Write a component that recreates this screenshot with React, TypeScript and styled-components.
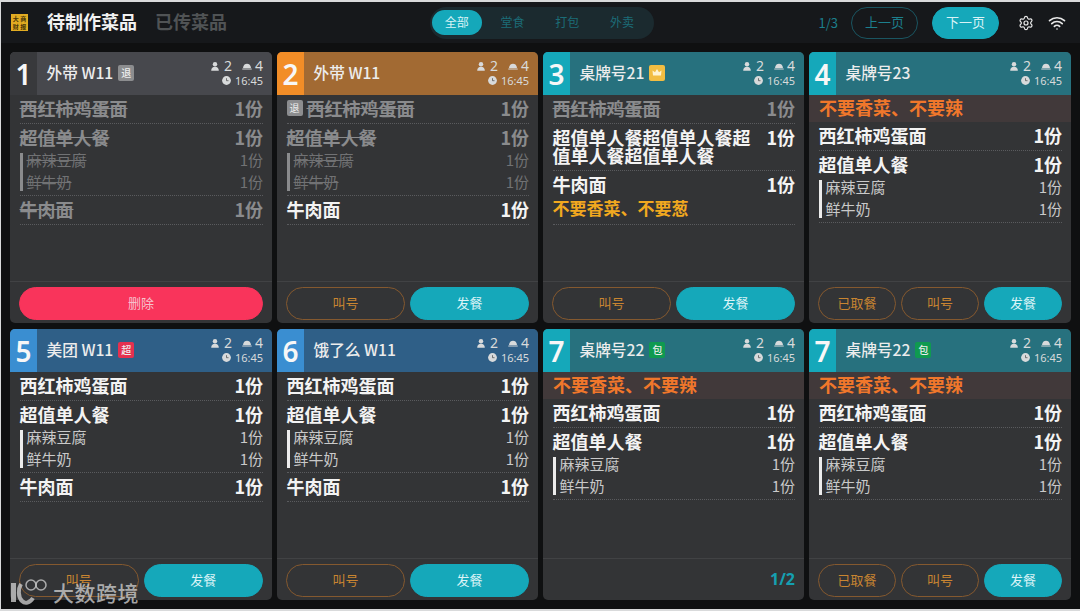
import React from "react";
import styled, { createGlobalStyle } from "styled-components";
import { Settings, Wifi } from "lucide-react";

const GlobalStyle = createGlobalStyle`
  html, body {
    margin: 0;
    padding: 0;
    background: #d9dadb;
  }
  * {
    box-sizing: border-box;
  }
  body {
    font-family: "Noto Sans CJK SC", "Noto Sans", sans-serif;
  }
`;

type Tone = "gray" | "orange" | "teal" | "blue";
type BadgeKind = "refund" | "over" | "crown" | "pack";
type ButtonKind = "outline" | "primary" | "danger";

type Item = {
  name: string;
  done?: boolean;
  refund?: boolean;
  note?: string;
  subs?: { name: string; done?: boolean }[];
};

type Order = {
  num: number;
  tone: Tone;
  title: string;
  badge?: BadgeKind;
  banner?: string;
  items: Item[];
  actions?: { label: string; kind: ButtonKind }[];
  pager?: string;
};

const toneColors: Record<Tone, { num: string; bar: string }> = {
  gray: { num: "#38393c", bar: "#47484d" },
  orange: { num: "#f28d27", bar: "#a26a33" },
  teal: { num: "#15a8ba", bar: "#27717e" },
  blue: { num: "#3a8ed1", bar: "#2f5f87" },
};

const badgeColors: Record<BadgeKind, string> = {
  refund: "#8c8d8f",
  over: "#e5304f",
  crown: "#f2bd42",
  pack: "#0f9a50",
};

const Page = styled.div`
  width: 1080px;
  height: 611px;
  padding: 2px 0 2px 1px;
  position: relative;
  overflow: hidden;
`;

const Screen = styled.div`
  height: 607px;
  background: #0f1011;
  display: flex;
  flex-direction: column;
`;

const Toolbar = styled.div`
  height: 41px;
  background: #16181b;
  display: grid;
  grid-template-columns: 429px 224px 1fr;
  align-items: center;
`;

const ToolLeft = styled.div`
  display: flex;
  align-items: center;
  padding-left: 10px;
`;

const Logo = styled.div`
  width: 17px;
  height: 17px;
  background: #e2ac22;
  color: #4a3608;
  font-size: 6px;
  line-height: 7px;
  font-weight: 700;
  display: grid;
  grid-template-columns: 1fr 1fr;
  text-align: center;
  padding: 1px;
  margin-right: 19px;
  overflow: hidden;
`;

const Heading = styled.div<{ $active?: boolean }>`
  font-size: 18px;
  font-weight: 700;
  line-height: 24px;
  margin-bottom: 3px;
  color: ${(p) => (p.$active ? "#f1f1f1" : "#505355")};
  margin-right: 18px;
`;

const Filters = styled.div`
  height: 32px;
  border-radius: 16px;
  background: #1b2a2f;
  display: flex;
  align-items: center;
  padding: 0 2px;
`;

const FilterTab = styled.div<{ $active?: boolean }>`
  width: 51px;
  height: 25px;
  margin-right: ${(p) => (p.$active ? "6px" : "5px")};
  padding-bottom: 2px;
  border-radius: 13px;
  display: flex;
  align-items: center;
  justify-content: center;
  font-size: 12px;
  color: ${(p) => (p.$active ? "#d9f3f6" : "#1b6d78")};
  background: ${(p) => (p.$active ? "#15a8ba" : "transparent")};
`;

const ToolRight = styled.div`
  display: flex;
  align-items: center;
  justify-content: flex-end;
  padding-right: 14px;
  color: #e8e8e8;
`;

const PageCount = styled.div`
  font-size: 13px;
  color: #1c7f8d;
  margin-right: 13px;
`;

const PageButton = styled.div<{ $primary?: boolean }>`
  width: 67px;
  height: 32px;
  padding-bottom: 2px;
  margin-right: ${(p) => (p.$primary ? "19px" : "14px")};
  border-radius: 16px;
  display: flex;
  align-items: center;
  justify-content: center;
  font-size: 13px;
  color: ${(p) => (p.$primary ? "#d9f3f6" : "#1c7f8d")};
  background: ${(p) => (p.$primary ? "#15a8ba" : "transparent")};
  border: 1px solid ${(p) => (p.$primary ? "#15a8ba" : "#1a5561")};
`;

const IconSlot = styled.div`
  display: flex;
  margin-right: 14px;
  &:last-child {
    margin-right: 0;
  }
`;

const Board = styled.div`
  flex: 1;
  padding: 9px 0 8px 9px;
  display: grid;
  grid-template-columns: 262px 261px 261px 262px;
  grid-template-rows: repeat(2, 271px);
  column-gap: 5px;
  row-gap: 6px;
`;

const Card = styled.div`
  background: #333436;
  border-radius: 5px;
  overflow: hidden;
  display: flex;
  flex-direction: column;
`;

const CardHead = styled.div<{ $tone: Tone }>`
  height: 43px;
  flex: none;
  display: flex;
  background: ${(p) => toneColors[p.$tone].bar};
`;

const NumCell = styled.div<{ $tone: Tone }>`
  width: 27px;
  flex: none;
  background: ${(p) => toneColors[p.$tone].num};
  color: #f7f7f7;
  font-family: "Noto Sans", sans-serif;
  font-size: 28px;
  font-weight: 600;
  display: flex;
  align-items: center;
  justify-content: center;
`;

const HeadTitle = styled.div`
  flex: 1;
  padding: 0 0 2px 9.5px;
  display: flex;
  align-items: center;
  font-size: 15.7px;
  font-weight: 500;
  color: #ececec;
  white-space: nowrap;
`;

const Badge = styled.span<{ $kind: BadgeKind }>`
  width: 16px;
  height: 16px;
  margin-left: 5px;
  border-radius: 2px;
  background: ${(p) => badgeColors[p.$kind]};
  color: #eee;
  font-size: 10px;
  display: inline-flex;
  align-items: center;
  justify-content: center;
`;

const Meta = styled.div`
  padding: 6px 9px 0 0;
  display: flex;
  flex-direction: column;
  align-items: flex-end;
  font-family: "Noto Sans", sans-serif;
  color: #d8dadb;
`;

const MetaLine = styled.div`
  display: flex;
  align-items: center;
  font-size: 14px;
  line-height: 16px;
`;

const MetaTime = styled(MetaLine)`
  font-size: 11px;
  line-height: 13px;
`;

const MetaGap = styled.span`
  width: 10px;
`;

const MetaIcon = styled.svg<{ $gap: number }>`
  margin-right: ${(p) => p.$gap}px;
`;

const Banner = styled.div`
  height: 27px;
  flex: none;
  padding-left: 10px;
  background: #41393a;
  color: #f0772b;
  font-size: 18px;
  font-weight: 700;
  line-height: 25px;
`;

const Body = styled.div`
  flex: 1;
  padding: 0 9px 0 9.5px;
`;

const Row = styled.div`
  padding: 4px 0 6px;
  border-bottom: 1px dotted #5a5b5e;
`;

const MainLine = styled.div<{ $done?: boolean }>`
  display: flex;
  justify-content: space-between;
  font-size: 18px;
  font-weight: 700;
  line-height: 18px;
  color: ${(p) => (p.$done ? "#8a8b8d" : "#f3f3f3")};
`;

const ItemName = styled.span<{ $done?: boolean }>`
  display: flex;
  align-items: center;
  max-width: 200px;
  text-decoration: ${(p) => (p.$done ? "line-through" : "none")};
`;

const Qty = styled.span`
  flex: none;
`;

const RefundTag = styled(Badge)`
  margin: 0 4px 0 0;
  font-size: 10px;
  font-weight: 400;
`;

const Note = styled.div`
  margin-top: 5px;
  font-size: 17px;
  font-weight: 700;
  line-height: 20px;
  color: #f1a81f;
`;

const SubList = styled.div<{ $done?: boolean }>`
  margin-top: 3px;
  margin-bottom: -3px;
  padding-left: 7px;
  position: relative;
  &::before {
    content: "";
    position: absolute;
    left: 0;
    top: 4px;
    bottom: 1px;
    width: 3px;
    background: ${(p) => (p.$done ? "#8a8b8d" : "#ececec")};
  }
`;

const SubLine = styled.div<{ $done?: boolean }>`
  display: flex;
  justify-content: space-between;
  font-size: 15px;
  line-height: 21.5px;
  color: ${(p) => (p.$done ? "#717274" : "#c9c9c9")};
`;

const SubName = styled.span<{ $done?: boolean }>`
  text-decoration: ${(p) => (p.$done ? "line-through" : "none")};
`;

const CardFoot = styled.div`
  height: 42px;
  flex: none;
  border-top: 1px solid #414244;
  padding: 5px 9px 0;
  display: flex;
  gap: 5px;
  align-items: flex-start;
`;

const ActionButton = styled.div<{ $kind: ButtonKind }>`
  flex: 1;
  height: 33px;
  padding-bottom: 3px;
  border-radius: 17px;
  display: flex;
  align-items: center;
  justify-content: center;
  font-size: 13px;
  border: 1px solid
    ${(p) =>
      p.$kind === "outline"
        ? "#85592f"
        : p.$kind === "danger"
          ? "#f9345b"
          : "#15a8ba"};
  background: ${(p) =>
    p.$kind === "outline"
      ? "transparent"
      : p.$kind === "danger"
        ? "#f9345b"
        : "#15a8ba"};
  color: ${(p) =>
    p.$kind === "outline"
      ? "#c98531"
      : p.$kind === "danger"
        ? "#f6c2cd"
        : "#dcf4f7"};
`;

const Pager = styled.div`
  margin-left: auto;
  font-family: "Noto Sans", sans-serif;
  font-size: 16px;
  font-weight: 700;
  line-height: 30px;
  color: #159fb0;
`;

const Watermark = styled.div`
  position: absolute;
  left: 10px;
  bottom: 5px;
  display: flex;
  align-items: center;
  color: rgba(205, 205, 205, 0.78);
  font-size: 21px;
  font-weight: 500;
  line-height: 28px;
  letter-spacing: 0.5px;
  pointer-events: none;
`;

const PersonIcon = () => (
  <MetaIcon $gap={5} width="8" height="9" viewBox="0 0 9 10" fill="currentColor">
    <circle cx="4.5" cy="2.5" r="2.5" />
    <path d="M0.200 9.800c0-3.200 1.800-4.500 4.300-4.500s4.300 1.300 4.300 4.500z" />
  </MetaIcon>
);

const DishIcon = () => (
  <MetaIcon $gap={3} width="10" height="7" viewBox="0 0 12 8" fill="currentColor">
    <path d="M1.200 5.800C1.400 2.600 3.400 0.800 6 0.800s4.600 1.800 4.800 5z" />
    <rect x="0.200" y="6.300" width="11.600" height="1.400" rx="0.600" />
  </MetaIcon>
);

const ClockIcon = () => (
  <MetaIcon $gap={4} width="9" height="9" viewBox="0 0 9 9">
    <circle cx="4.500" cy="4.500" r="4.400" fill="currentColor" />
    <path d="M4.500 2.200v2.500h2" stroke="#555" strokeWidth="0.800" fill="none" />
  </MetaIcon>
);

const CrownIcon = () => (
  <svg width="10" height="9" viewBox="0 0 10 9" fill="#fff3d0">
    <path d="M1 7.500 0.500 2.500 3 4.300 5 1l2 3.300 2.500-1.800L9 7.500z" />
  </svg>
);

const WatermarkLogo = () => (
  <svg width="43" height="28" viewBox="0 0 43 28" fill="none" stroke="currentColor">
    <path d="M3.500 5v19" strokeWidth="5" />
    <path d="M11 6c-3 5-3 13 1 17 3 3 8 2 11-3" strokeWidth="4" />
    <circle cx="21" cy="7" r="5" strokeWidth="1.500" />
    <circle cx="31" cy="7" r="5" strokeWidth="1.500" />
  </svg>
);

const soup = (done?: boolean, refund?: boolean): Item => ({
  name: "西红柿鸡蛋面",
  done,
  refund,
});

const combo = (done?: boolean): Item => ({
  name: "超值单人餐",
  done,
  subs: [
    { name: "麻辣豆腐", done },
    { name: "鲜牛奶", done },
  ],
});

const noodles = (done?: boolean): Item => ({ name: "牛肉面", done });

const twoActions = [
  { label: "叫号", kind: "outline" as ButtonKind },
  { label: "发餐", kind: "primary" as ButtonKind },
];

const threeActions = [
  { label: "已取餐", kind: "outline" as ButtonKind },
  ...twoActions,
];

const orders: Order[] = [
  {
    num: 1,
    tone: "gray",
    title: "外带 W11",
    badge: "refund",
    items: [soup(true), combo(true), noodles(true)],
    actions: [{ label: "删除", kind: "danger" }],
  },
  {
    num: 2,
    tone: "orange",
    title: "外带 W11",
    items: [soup(true, true), combo(true), noodles()],
    actions: twoActions,
  },
  {
    num: 3,
    tone: "teal",
    title: "桌牌号21",
    badge: "crown",
    items: [
      soup(true),
      { name: "超值单人餐超值单人餐超值单人餐超值单人餐" },
      { name: "牛肉面", note: "不要香菜、不要葱" },
    ],
    actions: twoActions,
  },
  {
    num: 4,
    tone: "teal",
    title: "桌牌号23",
    banner: "不要香菜、不要辣",
    items: [soup(), combo()],
    actions: threeActions,
  },
  {
    num: 5,
    tone: "blue",
    title: "美团 W11",
    badge: "over",
    items: [soup(), combo(), noodles()],
    actions: twoActions,
  },
  {
    num: 6,
    tone: "blue",
    title: "饿了么 W11",
    items: [soup(), combo(), noodles()],
    actions: twoActions,
  },
  {
    num: 7,
    tone: "teal",
    title: "桌牌号22",
    badge: "pack",
    banner: "不要香菜、不要辣",
    items: [soup(), combo()],
    pager: "1/2",
  },
  {
    num: 7,
    tone: "teal",
    title: "桌牌号22",
    badge: "pack",
    banner: "不要香菜、不要辣",
    items: [soup(), combo()],
    actions: threeActions,
  },
];

const badgeText: Record<BadgeKind, React.ReactNode> = {
  refund: "退",
  over: "超",
  crown: <CrownIcon />,
  pack: "包",
};

const OrderRow = ({ item }: { item: Item }) => (
  <Row>
    <MainLine $done={item.done}>
      <ItemName $done={item.done && !item.refund}>
        {item.refund && <RefundTag $kind="refund">退</RefundTag>}
        {item.refund ? <SubName $done>{item.name}</SubName> : item.name}
      </ItemName>
      <Qty>1份</Qty>
    </MainLine>
    {item.note && <Note>{item.note}</Note>}
    {item.subs && (
      <SubList $done={item.done}>
        {item.subs.map((sub) => (
          <SubLine key={sub.name} $done={sub.done}>
            <SubName $done={sub.done}>{sub.name}</SubName>
            <span>1份</span>
          </SubLine>
        ))}
      </SubList>
    )}
  </Row>
);

const OrderCard = ({ order }: { order: Order }) => (
  <Card>
    <CardHead $tone={order.tone}>
      <NumCell $tone={order.tone}>{order.num}</NumCell>
      <HeadTitle>
        {order.title}
        {order.badge && <Badge $kind={order.badge}>{badgeText[order.badge]}</Badge>}
      </HeadTitle>
      <Meta>
        <MetaLine>
          <PersonIcon />2<MetaGap />
          <DishIcon />4
        </MetaLine>
        <MetaTime>
          <ClockIcon />
          16:45
        </MetaTime>
      </Meta>
    </CardHead>
    {order.banner && <Banner>{order.banner}</Banner>}
    <Body>
      {order.items.map((item, i) => (
        <OrderRow key={i} item={item} />
      ))}
    </Body>
    <CardFoot>
      {order.actions?.map((action) => (
        <ActionButton key={action.label} $kind={action.kind}>
          {action.label}
        </ActionButton>
      ))}
      {order.pager && <Pager>{order.pager}</Pager>}
    </CardFoot>
  </Card>
);

export default function App() {
  return (
    <Page>
      <GlobalStyle />
      <Screen>
        <Toolbar>
          <ToolLeft>
            <Logo>
              <span>大</span>
              <span>商</span>
              <span>财</span>
              <span>报</span>
            </Logo>
            <Heading $active>待制作菜品</Heading>
            <Heading>已传菜品</Heading>
          </ToolLeft>
          <Filters>
            <FilterTab $active>全部</FilterTab>
            <FilterTab>堂食</FilterTab>
            <FilterTab>打包</FilterTab>
            <FilterTab>外卖</FilterTab>
          </Filters>
          <ToolRight>
            <PageCount>1/3</PageCount>
            <PageButton>上一页</PageButton>
            <PageButton $primary>下一页</PageButton>
            <IconSlot>
              <Settings size={16} strokeWidth={1.8} />
            </IconSlot>
            <IconSlot>
              <Wifi size={18} strokeWidth={2.2} />
            </IconSlot>
          </ToolRight>
        </Toolbar>
        <Board>
          {orders.map((order, i) => (
            <OrderCard key={i} order={order} />
          ))}
        </Board>
      </Screen>
      <Watermark>
        <WatermarkLogo />
        大数跨境
      </Watermark>
    </Page>
  );
}
